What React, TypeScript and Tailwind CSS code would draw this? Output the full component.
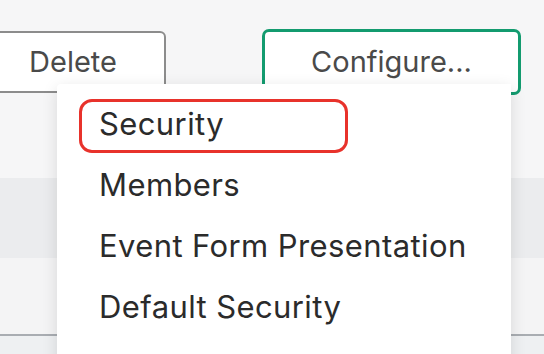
export default function App() {
  const items = ["Security", "Members", "Event Form Presentation", "Default Security"];
  return (
    <div className="relative w-[544px] h-[354px] overflow-hidden bg-[#f6f6f7]" style={{ fontFamily: "Inter, 'Open Sans', sans-serif" }}>
      <div className="h-[178px] flex items-start pt-[29px]">
        <button className="ml-[-20px] mt-[2px] w-[186px] h-[62px] bg-white border-2 border-[#8c8c8c] rounded-tr-[6px] text-[29px] text-[#4a4a4a] flex items-center justify-center">
          Delete
        </button>
        <button className="ml-[96px] w-[259px] h-[66px] bg-white border-[3px] border-[#139b6f] rounded-[7px] text-[29px] text-[#4a4a4a] flex items-center justify-center">
          Configure...
        </button>
      </div>
      <div className="h-[80px] bg-[#ebecee]" />
      <div className="h-[78px] bg-[#f4f4f5] border-b-2 border-[#a9adb2]" />
      <div className="h-[18px] bg-[#eef0f2]" />
      <div className="absolute left-[57px] top-[84px] w-[454px] h-[290px] bg-white rounded-tl-[4px] shadow-[0_4px_16px_rgba(0,0,0,0.12)] pt-[15px] flex flex-col gap-[7px]">
        {items.map((t, i) => (
          <div
            key={t}
            className={
              i === 0
                ? "ml-[22px] w-[269px] h-[54px] border-[3px] border-[#e8322b] rounded-[13px] pl-[17px] pb-[4px] flex items-center text-[31px] tracking-[0.4px] text-[#2b2b2b]"
                : "ml-[22px] h-[54px] pl-[20px] pb-[4px] flex items-center text-[31px] tracking-[0.4px] text-[#2b2b2b]"
            }
          >
            {t}
          </div>
        ))}
      </div>
    </div>
  );
}
